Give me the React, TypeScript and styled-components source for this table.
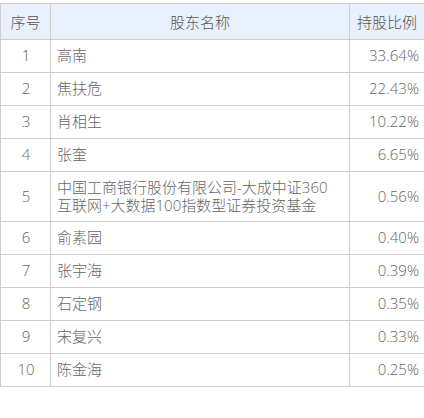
import styled, { createGlobalStyle } from "styled-components";

const GlobalStyle = createGlobalStyle`
  html, body {
    margin: 0;
    padding: 0;
    background: #ffffff;
  }
  body {
    font-family: "Open Sans", "Noto Sans CJK SC", sans-serif;
  }
`;

const Page = styled.div`
  padding-top: 3px;
  width: 424px;
`;

const Table = styled.table`
  width: 424px;
  border-collapse: collapse;
  table-layout: fixed;
  font-size: 15px;
  font-weight: 300;
  color: #666;
`;

const HeadCell = styled.th<{ $w: number }>`
  width: ${(p) => p.$w}px;
  height: 36px;
  padding: 0 5px;
  background: #e8f0fc;
  border: 1px solid #cfcfcf;
  font-weight: 300;
  color: #555;
  text-align: center;
  line-height: 18px;
  box-sizing: border-box;
`;

const Cell = styled.td<{ $align?: string; $padRight?: number }>`
  height: 33px;
  padding: 7px ${(p) => p.$padRight ?? 5}px 7px 6px;
  border: 1px solid #cfcfcf;
  text-align: ${(p) => p.$align || "left"};
  line-height: 17.5px;
  box-sizing: border-box;
  vertical-align: middle;
`;

const rows = [
  ["1", "高南", "33.64%"],
  ["2", "焦扶危", "22.43%"],
  ["3", "肖相生", "10.22%"],
  ["4", "张奎", "6.65%"],
  ["5", "中国工商银行股份有限公司-大成中证360互联网+大数据100指数型证券投资基金", "0.56%"],
  ["6", "俞素园", "0.40%"],
  ["7", "张宇海", "0.39%"],
  ["8", "石定钢", "0.35%"],
  ["9", "宋复兴", "0.33%"],
  ["10", "陈金海", "0.25%"],
];

export default function App() {
  return (
    <Page>
      <GlobalStyle />
      <Table>
        <thead>
          <tr>
            <HeadCell $w={50}>序号</HeadCell>
            <HeadCell $w={299}>股东名称</HeadCell>
            <HeadCell $w={75}>持股比例</HeadCell>
          </tr>
        </thead>
        <tbody>
          {rows.map((r) => (
            <tr key={r[0]}>
              <Cell $align="center">{r[0]}</Cell>
              <Cell $padRight={12}>{r[1]}</Cell>
              <Cell $align="right">{r[2]}</Cell>
            </tr>
          ))}
        </tbody>
      </Table>
    </Page>
  );
}
